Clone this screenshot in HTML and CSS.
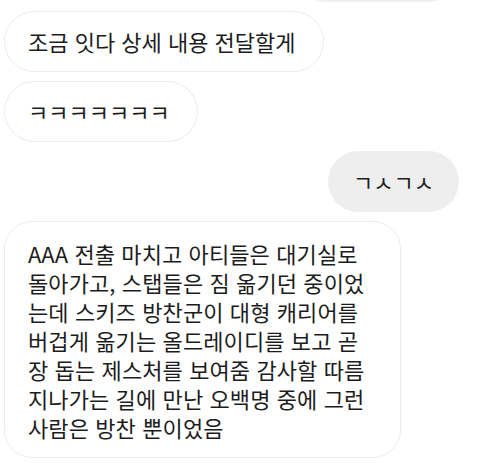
FILE: index.html
```html
<!DOCTYPE html>
<html lang="ko">
<head>
    <meta charset="UTF-8">
    <meta name="viewport" content="width=device-width, initial-scale=1.0">
    <title>대화</title>
    <link rel="stylesheet" href="styles.css">
</head>
<body>
    <div class="chat">
        <div class="bubble sent first"></div>
        <div class="bubble received">조금 잇다 상세 내용 전달할게</div>
        <div class="bubble received">ㅋㅋㅋㅋㅋㅋㅋ</div>
        <div class="bubble sent">ㄱㅅㄱㅅ</div>
        <div class="bubble received long">AAA 전출 마치고 아티들은 대기실로<br>돌아가고, 스탭들은 짐 옮기던 중이었<br>는데 스키즈 방찬군이 대형 캐리어를<br>버겁게 옮기는 올드레이디를 보고 곧<br>장 돕는 제스처를 보여줌 감사할 따름<br>지나가는 길에 만난 오백명 중에 그런<br>사람은 방찬 뿐이었음</div>
    </div>
</body>
</html>
```

FILE: styles.css
```css
body {
    margin: 0;
    padding: 0;
    background-color: #ffffff;
    font-family: "Noto Sans CJK KR", "Noto Sans", sans-serif;
    color: #1c1c1c;
    overflow: hidden;
}
.chat {
    display: flex;
    flex-direction: column;
    gap: 9px;
    padding: 0 21px 0 4px;
}
.bubble {
    font-size: 22px;
    line-height: 29px;
    padding: 16px 25px;
    border-radius: 31px;
    box-sizing: border-box;
    white-space: nowrap;
}
.bubble.first {
    margin-top: -59px;
    width: 163px;
    height: 61px;
}
.received {
    align-self: flex-start;
    background-color: #ffffff;
    border: 1px solid #ececec;
    padding: 15px 27px 15px 23px;
}
.sent {
    align-self: flex-end;
    background-color: #eeeeee;
}
.received.long {
    border-radius: 28px;
    padding: 17px 36px 15px 23px;
    letter-spacing: 0.1px;
}
```
